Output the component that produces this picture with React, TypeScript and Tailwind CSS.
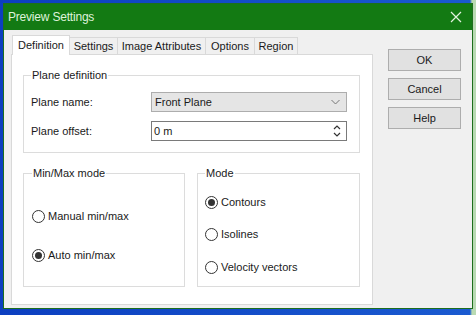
import React from 'react';

const font = { fontFamily: '"Liberation Sans", Arial, sans-serif' };

function Radio({ label, checked }: { label: string; checked?: boolean }) {
  return (
    <div className="flex h-[16px] items-center gap-[3px]">
      <span className="flex h-[13px] w-[13px] items-center justify-center rounded-full border border-[#333] bg-white">
        {checked && <span className="h-[7px] w-[7px] rounded-full bg-[#333]" />}
      </span>
      <span>{label}</span>
    </div>
  );
}

function Tab({ label, width, active }: { label: string; width: number; active?: boolean }) {
  return active ? (
    <div
      className="relative z-10 -mb-px flex h-[20px] items-center justify-center border border-b-0 border-[#d9d9d9] bg-white"
      style={{ width }}
    >
      {label}
    </div>
  ) : (
    <div
      className="flex h-[17px] items-center justify-center border border-l-0 border-b-0 border-[#d9d9d9] bg-[#f0f0f0]"
      style={{ width }}
    >
      {label}
    </div>
  );
}

function Button({ label }: { label: string }) {
  return (
    <div className="flex h-[22px] w-[73px] items-center justify-center border border-[#adadad] bg-[#e1e1e1]">
      {label}
    </div>
  );
}

export default function App() {
  return (
    <div
      className="h-[315px] w-[476px] overflow-hidden bg-[linear-gradient(to_right,#0c3fc0_0,#1a5ad0_470px,#b9dab3_472px)] pl-[3px] pt-[3px] text-[11px] text-[#1a1a1a]"
      style={font}
    >
      <div className="flex h-[306px] w-[470px] flex-col border border-[#1d6e1d] bg-[#f0f0f0]">
        {/* Title bar */}
        <div className="flex h-[26px] items-center justify-between bg-[#137a13] pl-[4px] pr-[10px] text-[12px] tracking-[-0.2px] text-[#dff2da]">
          <span>Preview Settings</span>
          <svg width="12" height="12" viewBox="0 0 12 12">
            <path d="M1 1 L11 11 M11 1 L1 11" stroke="#e3f2df" strokeWidth="1.2" />
          </svg>
        </div>

        <div className="flex flex-1">
          {/* Tabs + panel */}
          <div className="ml-[7px] mt-[5px] flex flex-col">
            <div className="flex items-end pl-[1px]">
              <Tab label="Definition" width={58} active />
              <Tab label="Settings" width={48} />
              <Tab label="Image Attributes" width={88} />
              <Tab label="Options" width={49} />
              <Tab label="Region" width={43} />
            </div>
            <div className="flex h-[251px] w-[362px] flex-col border border-[#d9d9d9] bg-white px-[11px] pt-[13px]">
              <fieldset className="h-[85px] w-[337px] border border-[#dcdcdc] px-[7px]">
                <legend className="px-[1px] leading-[14px]">Plane definition</legend>
                <div className="mt-[10px] flex h-[20px] items-center">
                  <span className="w-[120px]">Plane name:</span>
                  <div className="flex h-[20px] w-[196px] items-center justify-between border border-[#adadad] bg-[#e5e5e5] pl-[3px] pr-[6px]">
                    <span>Front Plane</span>
                    <svg width="9" height="6" viewBox="0 0 9 6">
                      <path d="M0.5 1 L4.5 5 L8.5 1" fill="none" stroke="#777" strokeWidth="1" />
                    </svg>
                  </div>
                </div>
                <div className="mt-[9px] flex h-[20px] items-center">
                  <span className="w-[120px]">Plane offset:</span>
                  <div className="flex h-[20px] w-[196px] items-center justify-between border border-[#7a7a7a] bg-white pl-[2px] pr-[5px]">
                    <span>0 m</span>
                    <svg width="8" height="14" viewBox="0 0 8 14">
                      <path d="M1 5 L4 2 L7 5" fill="none" stroke="#333" strokeWidth="1.2" />
                      <path d="M1 9 L4 12 L7 9" fill="none" stroke="#333" strokeWidth="1.2" />
                    </svg>
                  </div>
                </div>
              </fieldset>

              <div className="mt-[13px] flex gap-[12px]">
                <fieldset className="h-[121px] w-[162px] border border-[#dcdcdc] px-[8px]">
                  <legend className="px-[1px] leading-[14px]">Min/Max mode</legend>
                  <div className="mt-[28px] flex flex-col gap-[23px]">
                    <Radio label="Manual min/max" />
                    <Radio label="Auto min/max" checked />
                  </div>
                </fieldset>
                <fieldset className="h-[121px] w-[163px] border border-[#dcdcdc] px-[7px]">
                  <legend className="px-[1px] leading-[14px]">Mode</legend>
                  <div className="mt-[14px] flex flex-col">
                    <Radio label="Contours" checked />
                    <div className="mt-[16px]">
                      <Radio label="Isolines" />
                    </div>
                    <div className="mt-[17px]">
                      <Radio label="Velocity vectors" />
                    </div>
                  </div>
                </fieldset>
              </div>
            </div>
          </div>

          {/* Buttons */}
          <div className="ml-[15px] mt-[19px] flex flex-col gap-[7px]">
            <Button label="OK" />
            <Button label="Cancel" />
            <Button label="Help" />
          </div>
        </div>
      </div>
    </div>
  );
}
